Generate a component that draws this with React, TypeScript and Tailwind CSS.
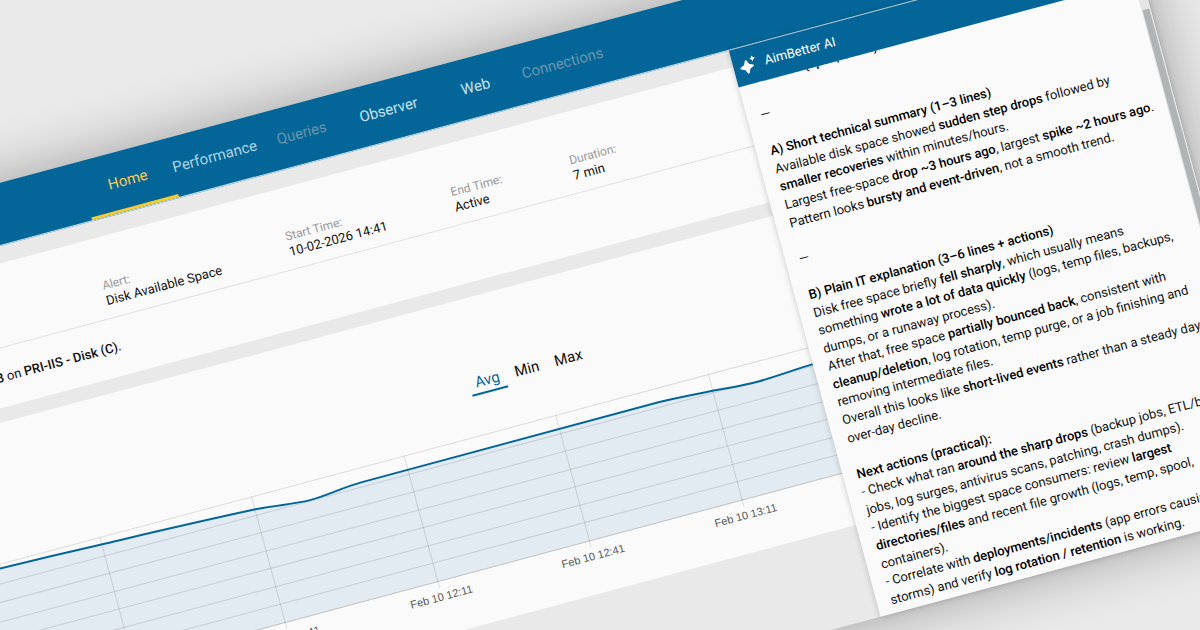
import { Fragment, ReactNode, useState } from "react";

interface NavItem {
  label: string;
  className: string;
}

interface AlertField {
  label: string;
  value: string;
}

const navItems: NavItem[] = [
  { label: "Home", className: "border-[#f8cb2e] text-[#fbc64f]" },
  { label: "Performance", className: "border-transparent text-[#a9d3e3]" },
  { label: "Queries", className: "border-transparent text-[#6b93ab]" },
  { label: "Observer", className: "border-transparent text-[#c4e2ee]" },
  { label: "Web", className: "border-transparent text-[#c4e2ee]" },
  { label: "Connections", className: "border-transparent text-[#6b93ab]" },
];

const alertFields: AlertField[] = [
  { label: "Alert:", value: "Disk Available Space" },
  { label: "Start Time:", value: "10-02-2026 14:41" },
  { label: "End Time:", value: "Active" },
  { label: "Duration:", value: "7 min" },
];

const modes = ["Avg", "Min", "Max"];

// Chart geometry, in px of the plot area
const gridX = [144, 301, 459, 616, 774];
const gridY = [8, 27, 45, 64, 82, 101, 119, 138];
const ticks = [
  { x: 301, label: "Feb 10 11:41" },
  { x: 459, label: "Feb 10 12:11" },
  { x: 616, label: "Feb 10 12:41" },
  { x: 774, label: "Feb 10 13:11" },
];
const seriesPath =
  "M0 12 L40 12.5 Q92 13.5 143 15.5 C190 17 230 18 302 21.5 C325 23 340 26.5 357 26.7 C378 26.5 390 23 412 22.8 L720 22.3 C740 22.8 755 24 774 25.3 C795 27 805 28.4 822 28.2 C840 27.8 860 26 878 25.5";

const aiLines: ReactNode[] = [
  <b>Disk info (open, event)</b>,
  "",
  "—",
  "",
  <b>A) Short technical summary (1–3 lines)</b>,
  <>Available disk space showed <b>sudden step drops</b> followed by</>,
  <><b>smaller recoveries</b> within minutes/hours.</>,
  <>Largest free-space <b>drop ~3 hours ago</b>, largest <b>spike ~2 hours ago</b>.</>,
  <>Pattern looks <b>bursty and event-driven</b>, not a smooth trend.</>,
  "",
  "—",
  "",
  <b>B) Plain IT explanation (3–6 lines + actions)</b>,
  <>Disk free space briefly <b>fell sharply</b>, which usually means</>,
  <>something <b>wrote a lot of data quickly</b> (logs, temp files, backups,</>,
  "dumps, or a runaway process).",
  <>After that, free space <b>partially bounced back</b>, consistent with</>,
  <><b>cleanup/deletion</b>, log rotation, temp purge, or a job finishing and</>,
  "removing intermediate files.",
  <>Overall this looks like <b>short-lived events</b> rather than a steady day-</>,
  "over-day decline.",
  "",
  <b>Next actions (practical):</b>,
  <>- Check what ran <b>around the sharp drops</b> (backup jobs, ETL/batch</>,
  "jobs, log surges, antivirus scans, patching, crash dumps).",
  <>- Identify the biggest space consumers: review <b>largest</b></>,
  <><b>directories/files</b> and recent file growth (logs, temp, spool,</>,
  "containers).",
  <>- Correlate with <b>deployments/incidents</b> (app errors causing</>,
  <>storms) and verify <b>log rotation / retention</b> is working.</>,
];

function SparkleIcon() {
  return (
    <svg viewBox="0 0 18 18" className="w-[18px] h-[18px]" fill="#fff" aria-hidden="true">
      <path
        d="M7.5 4.5 L9.4 8.6 L13.5 10.5 L9.4 12.4 L7.5 16.5 L5.6 12.4 L1.5 10.5 L5.6 8.6 Z"
        stroke="#fff"
        strokeWidth="1.8"
        strokeLinejoin="round"
      />
      <path d="M14.4 0.4 L15.4 2.4 L17.4 3.4 L15.4 4.4 L14.4 6.4 L13.4 4.4 L11.4 3.4 L13.4 2.4 Z" />
    </svg>
  );
}

function DiskChart() {
  return (
    <svg viewBox="0 0 878 170" className="block w-[878px] h-[170px]" role="img" aria-label="Disk available space">
      <path d={`${seriesPath} V138 H0 Z`} fill="#e2eaf2" />
      <g stroke="#000" strokeOpacity="0.12" strokeWidth="1">
        {gridY.map((y) => (
          <line key={y} x1="0" x2="878" y1={y + 0.5} y2={y + 0.5} />
        ))}
        {gridX.map((x) => (
          <line key={x} x1={x + 0.5} x2={x + 0.5} y1="8" y2="145" />
        ))}
      </g>
      <line x1="0" x2="878" y1="138.5" y2="138.5" stroke="#000" strokeOpacity="0.12" />
      <path d={seriesPath} fill="none" stroke="#046698" strokeWidth="2" />
      {ticks.map((t) => (
        <text
          key={t.x}
          x={t.x}
          y="158"
          textAnchor="middle"
          className="fill-[#555] font-['Liberation_Sans',sans-serif] text-[11px]"
        >
          {t.label}
        </text>
      ))}
    </svg>
  );
}

export default function App() {
  const [mode, setMode] = useState("Avg");

  return (
    <div className="h-screen overflow-hidden bg-[#eaeaea] pt-[219px] font-[Roboto,sans-serif] text-[13px]">
      <div className="-ml-[135px] w-[108%] origin-top-left -rotate-15 bg-[#e9e9e9] shadow-[0_0_60px_rgba(0,0,0,0.32)]">
        {/* Top navigation */}
        <header className="flex border-b border-[#c9dfe9] bg-[#046698] pl-[219px]">
          <nav className="flex h-[60px]">
            {navItems.map((item) => (
              <a
                key={item.label}
                href="#"
                className={`flex w-[90px] items-center justify-center border-b-3 pt-[3px] text-[15px] ${item.className}`}
              >
                {item.label}
              </a>
            ))}
          </nav>
        </header>

        <div className="flex">
          <main className="min-w-0 flex-1 overflow-hidden pt-[17px]">
            {/* Alert details */}
            <section className="bg-[#fafafa]">
              <dl className="flex gap-[70px] border-b border-[#e2e2e2] pt-[41px] pb-[10px] pl-[212px] leading-[15px]">
                {alertFields.map((field) => (
                  <div key={field.label}>
                    <dt className="text-[12px] leading-[15px] text-[#999]">{field.label}</dt>
                    <dd className="text-[#111]">{field.value}</dd>
                  </div>
                ))}
              </dl>
              <p className="flex h-[58px] items-center pl-[85px] text-[#111]">
                <span>
                  <b className="font-medium">B</b> on <b className="font-medium">PRI-IIS - Disk (C)</b>.
                </span>
              </p>
            </section>

            {/* Chart */}
            <section className="mt-[14px] bg-[#fafafa] pt-[74px] pb-[22px]">
              <div className="flex gap-[4px] pl-[541px]">
                {modes.map((m) => (
                  <button
                    key={m}
                    type="button"
                    onClick={() => setMode(m)}
                    className={`border-b-2 px-[6px] pb-px text-[15px] leading-5 ${
                      m === mode ? "border-[#046698] text-[#046698]" : "border-transparent text-[#111]"
                    }`}
                  >
                    {m}
                  </button>
                ))}
              </div>
              <div className="mt-[31px]">
                <DiskChart />
              </div>
            </section>
          </main>

          {/* AI assistant */}
          <aside className="flex h-[586px] w-[418px] flex-col bg-[#fafafa] shadow-[0_0_6px_rgba(0,0,0,0.2)]">
            <h2 className="z-10 flex h-[38px] shrink-0 items-center gap-[8px] bg-[#046698] pl-[6px] text-white">
              <SparkleIcon />
              AimBetter AI
            </h2>
            <div className="flex min-h-0 flex-1">
              <div className="min-w-0 flex-1 overflow-hidden pl-[14px]">
                <div className="-mt-[13px] leading-[1.43] whitespace-nowrap text-[#111] [&_b]:font-medium [&_b]:text-black">
                  {aiLines.map((line, i) => (
                    <Fragment key={i}>
                      {line}
                      <br />
                    </Fragment>
                  ))}
                </div>
              </div>
              <div className="w-[9px] bg-[#e4e4e4] px-px pt-[30px]">
                <div className="h-full bg-[#b0b4b4]" />
              </div>
            </div>
          </aside>
        </div>
      </div>
    </div>
  );
}
